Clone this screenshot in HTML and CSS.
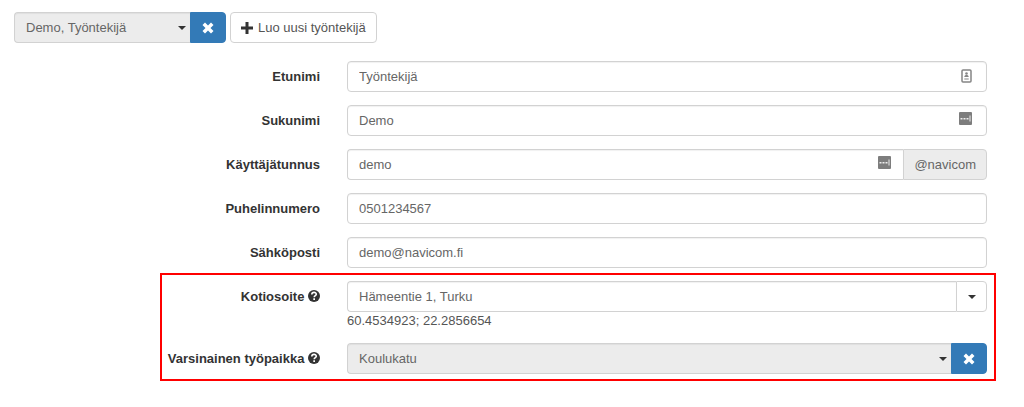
FILE: index.html
```html
<!DOCTYPE html>
<html lang="fi">
<head>
    <meta charset="UTF-8">
    <meta name="viewport" content="width=device-width, initial-scale=1.0">
    <title>Työntekijä</title>
    <link rel="stylesheet" href="styles.css">
</head>
<body>
    <div class="toolbar">
        <div class="input-group employee">
            <div class="select-wrap">
                <select class="control" aria-label="Työntekijä">
                    <option>Demo, Työntekijä</option>
                </select>
            </div>
            <button type="button" class="btn btn-clear" aria-label="Tyhjennä">
                <svg width="12" height="12" viewBox="0 0 12 12"><path d="M3 0.5 6 3.5 9 0.5 11.5 3 8.5 6 11.5 9 9 11.5 6 8.5 3 11.5 0.5 9 3.5 6 0.5 3z"/></svg>
            </button>
        </div>
        <button type="button" class="btn btn-new">
            <svg width="12" height="12" viewBox="0 0 12 12"><path d="M4.5 0h3v4.5h4.5v3h-4.500v4.500h-3v-4.500h-4.500v-3h4.500z"/></svg>
            Luo uusi työntekijä
        </button>
    </div>

    <form class="form">
        <div class="row">
            <label for="etunimi">Etunimi</label>
            <div class="field">
                <input type="text" id="etunimi" class="control" value="Työntekijä">
                <svg class="field-icon card-icon" width="13" height="14" viewBox="0 0 13 14">
                    <rect x="2" y="1" width="9" height="12" rx="1" fill="#fff" stroke="#858585" stroke-width="1.5"/>
                    <circle cx="6.5" cy="4.5" r="1.3" fill="#858585"/>
                    <path d="M4.3 8c0-2.6 4.4-2.6 4.4 0zM4.3 9.5h4.4v1H4.3z" fill="#858585"/>
                </svg>
            </div>
        </div>
        <div class="row">
            <label for="sukunimi">Sukunimi</label>
            <div class="field">
                <input type="text" id="sukunimi" class="control" value="Demo">
                <svg class="field-icon" width="13" height="13" viewBox="0 0 13 13">
                    <rect width="13" height="13" rx="1" fill="#7d7d7d"/>
                    <path d="M1.5 6h2v1.5h-2zM4.5 6h2v1.5h-2zM7.5 6h2v1.5h-2zM10.5 3.5h1v6h-1z" fill="#eee"/>
                </svg>
            </div>
        </div>
        <div class="row">
            <label for="tunnus">Käyttäjätunnus</label>
            <div class="input-group">
                <div class="field">
                    <input type="text" id="tunnus" class="control" value="demo">
                    <svg class="field-icon" width="13" height="13" viewBox="0 0 13 13">
                        <rect width="13" height="13" rx="1" fill="#7d7d7d"/>
                        <path d="M1.5 6h2v1.5h-2zM4.5 6h2v1.5h-2zM7.5 6h2v1.5h-2zM10.5 3.5h1v6h-1z" fill="#eee"/>
                    </svg>
                </div>
                <span class="addon">@navicom</span>
            </div>
        </div>
        <div class="row">
            <label for="puhelin">Puhelinnumero</label>
            <input type="tel" id="puhelin" class="control" value="0501234567">
        </div>
        <div class="row">
            <label for="sahkoposti">Sähköposti</label>
            <input type="email" id="sahkoposti" class="control" value="demo@navicom.fi">
        </div>

        <div class="highlight">
            <div class="row">
                <label for="osoite">Kotiosoite
                    <svg class="help-icon" width="12" height="12" viewBox="0 0 12 12">
                        <circle cx="6" cy="6" r="6" fill="#333"/>
                        <path d="M3.8 4.6C3.8 1.6 8.3 1.8 8.3 4.3 8.3 5.8 6.2 5.6 6.2 7.3" fill="none" stroke="#fff" stroke-width="1.6"/>
                        <path d="M5.3 8.3h1.7v1.6H5.3z" fill="#fff"/>
                    </svg>
                </label>
                <div>
                    <div class="input-group">
                        <input type="text" id="osoite" class="control" value="Hämeentie 1, Turku">
                        <button type="button" class="btn btn-toggle" aria-label="Näytä osoitteet"><span class="caret"></span></button>
                    </div>
                    <div class="coordinates">60.4534923; 22.2856654</div>
                </div>
            </div>
            <div class="row">
                <label for="tyopaikka">Varsinainen työpaikka
                    <svg class="help-icon" width="12" height="12" viewBox="0 0 12 12">
                        <circle cx="6" cy="6" r="6" fill="#333"/>
                        <path d="M3.8 4.6C3.8 1.6 8.3 1.8 8.3 4.3 8.3 5.8 6.2 5.6 6.2 7.3" fill="none" stroke="#fff" stroke-width="1.6"/>
                        <path d="M5.3 8.3h1.7v1.6H5.3z" fill="#fff"/>
                    </svg>
                </label>
                <div class="input-group">
                    <div class="select-wrap">
                        <select id="tyopaikka" class="control">
                            <option>Koulukatu</option>
                        </select>
                    </div>
                    <button type="button" class="btn btn-clear" aria-label="Tyhjennä">
                        <svg width="12" height="12" viewBox="0 0 12 12"><path d="M3 0.5 6 3.5 9 0.5 11.5 3 8.5 6 11.5 9 9 11.5 6 8.5 3 11.5 0.5 9 3.5 6 0.5 3z"/></svg>
                    </button>
                </div>
            </div>
        </div>
    </form>
</body>
</html>
```
FILE: styles.css
```css
* {
    box-sizing: border-box;
}

body {
    margin: 0;
    padding: 12px 0 24px;
    background-color: #fff;
    color: #333;
    font-family: "Liberation Sans", Arial, sans-serif;
    font-size: 13px;
    line-height: 18px;
}

/* Toolbar */
.toolbar {
    display: flex;
    gap: 4px;
    padding-left: 14px;
    margin-bottom: 18px;
}

.employee {
    width: 212px;
}

/* Form rows */
.form {
    padding-right: 37px;
}

.row {
    display: grid;
    grid-template-columns: 1fr 2fr;
    column-gap: 27px;
    align-items: start;
    margin-bottom: 13px;
}

label {
    padding-top: 7px;
    font-weight: bold;
    text-align: right;
}

.help-icon {
    vertical-align: -1px;
}

/* Controls */
.control {
    display: block;
    width: 100%;
    min-width: 0;
    height: 31px;
    margin: 0;
    padding: 0 11px;
    border: 1px solid #d2d2d2;
    border-radius: 4px;
    background-color: #fff;
    color: #666;
    font: inherit;
    box-shadow: inset 0 1px 1px rgba(0, 0, 0, 0.06);
}

select.control {
    appearance: none;
    background-color: #ececec;
}

.field,
.select-wrap {
    position: relative;
    flex: 1;
}

.field-icon {
    position: absolute;
    top: 7px;
    right: 15px;
}

.card-icon {
    top: 8px;
    right: 14px;
}

/* Input groups */
.input-group {
    display: flex;
}

.input-group .control {
    border-right: none;
    border-top-right-radius: 0;
    border-bottom-right-radius: 0;
}

.input-group .field-icon {
    right: 12px;
}

.addon {
    display: flex;
    align-items: center;
    height: 31px;
    padding: 0 10px;
    border: 1px solid #d2d2d2;
    border-radius: 0 4px 4px 0;
    background-color: #ececec;
    color: #666;
}

.caret,
.select-wrap::after {
    width: 0;
    border-top: 4px solid #333;
    border-left: 4px solid transparent;
    border-right: 4px solid transparent;
}

.select-wrap::after {
    content: '';
    position: absolute;
    top: 14px;
    right: 4px;
    pointer-events: none;
}

/* Buttons */
.btn {
    display: flex;
    align-items: center;
    justify-content: center;
    height: 31px;
    padding: 0 11px;
    border: 1px solid #d2d2d2;
    border-radius: 4px;
    background-color: #fff;
    color: #555;
    font: inherit;
    cursor: pointer;
}

.btn-new {
    gap: 5px;
    padding: 0 10px;
    fill: #333;
}

.btn-clear {
    width: 36px;
    border-color: #337ab7;
    border-radius: 0 4px 4px 0;
    background-color: #337ab7;
    fill: #fff;
}

.btn-toggle {
    width: 31px;
    border-radius: 0 4px 4px 0;
}

.coordinates {
    line-height: 18px;
    color: #555;
}

/* Red frame around the address rows */
.highlight {
    position: relative;
}

.highlight::before {
    content: '';
    position: absolute;
    top: -8px;
    right: -9px;
    bottom: -7px;
    left: 160px;
    border: 2px solid #f00;
    pointer-events: none;
}

.highlight .row:last-child {
    margin-bottom: 0;
}
```
